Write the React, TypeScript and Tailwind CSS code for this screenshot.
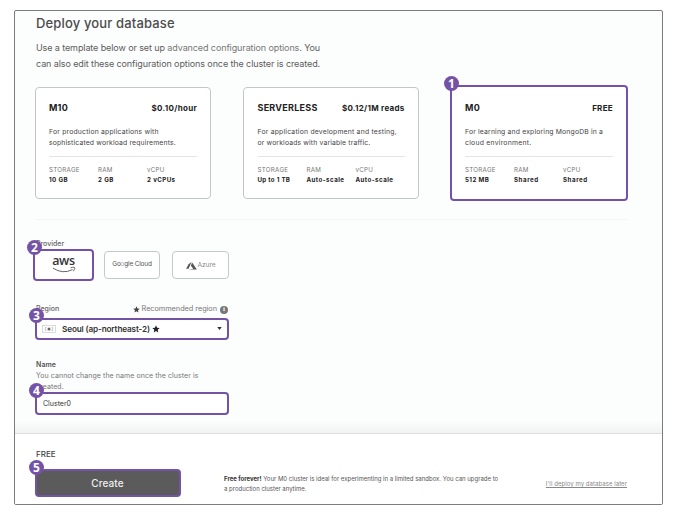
import React from "react";

function Badge({ n, className }: { n: number; className: string }) {
  return (
    <span
      className={`absolute z-10 flex size-[15px] items-center justify-center rounded-full bg-[#7453a6] font-['Open_Sans',sans-serif] text-[12px] leading-none font-bold text-white ${className}`}
    >
      {n}
    </span>
  );
}

function Star({ className }: { className: string }) {
  return (
    <svg viewBox="0 0 24 24" className={className} fill="currentColor">
      <path d="M12 1l3.2 7.4 8 .7-6.1 5.3 1.9 7.9-7-4.2-7 4.2 1.9-7.9L.8 9.100l8-.7z" />
    </svg>
  );
}

function Spec({ label, value, track }: { label: string; value: string; track: string }) {
  return (
    <div className="w-[49px] shrink-0 whitespace-nowrap">
      <div className="text-[6.2px] leading-[10px] tracking-[0.28px] text-[#777]">{label}</div>
      <div className={`text-[6.2px] leading-[10px] font-bold text-[#222] ${track}`}>{value}</div>
    </div>
  );
}

type CardProps = {
  title: string;
  titleTrack: string;
  price: string;
  priceTrack: string;
  lines: [string, string][];
  specs: [string, string, string][];
};

function CardBody({ title, titleTrack, price, priceTrack, lines, specs }: CardProps) {
  return (
    <>
      <div className="flex h-[12px] items-center justify-between whitespace-nowrap text-[#222]">
        <span className={`text-[9px] font-bold ${titleTrack}`}>{title}</span>
        <span className={`text-[8px] font-bold ${priceTrack}`}>{price}</span>
      </div>
      <div className="mt-[13px] text-[6.8px] leading-[10.5px] whitespace-nowrap text-[#444]">
        {lines.map(([t, k]) => (
          <div key={t} className={k}>{t}</div>
        ))}
      </div>
      <div className="mt-[8px] h-px bg-[#e3e4e4]" />
      <div className="mt-[8px] flex">
        {specs.map(([l, v, k]) => (
          <Spec key={l} label={l} value={v} track={k} />
        ))}
      </div>
    </>
  );
}

export default function App() {
  return (
    <div className="h-[520px] w-[674px] bg-white pt-[10px] pl-[14px] font-[Inter,sans-serif]">
      <div className="flex h-[495px] w-[649px] flex-col overflow-hidden rounded-[2px] border border-[#7c7c7c] bg-[#fcfdfd]">
        <main className="h-[422px] shrink-0 bg-linear-to-b from-transparent from-97% to-[#f1f2f2] pl-[20px]">
          <h1 className="pt-[2px] pl-px text-[13px] leading-[20px] font-medium tracking-[0.15px] whitespace-nowrap text-[#4c4c4c]">
            Deploy your database
          </h1>
          <div className="mt-[7px] pl-px text-[9px] leading-[15.5px] tracking-[-0.1px] whitespace-nowrap text-[#5c5c5c]">
            <div>
              Use a template below or set up <span className="text-[#777]">advanced configuration options.</span> You
            </div>
            <div>can also edit these configuration options once the cluster is created.</div>
          </div>

          <div className="mt-[14px] flex h-[116px] w-[593px] items-center justify-between">
            <section className="h-[112px] w-[176px] rounded-[4px] border border-[#c2c6c6] bg-white px-[13px] pt-[14px]">
              <CardBody
                title="M10"
                titleTrack="tracking-[0.2px]"
                price="$0.10/hour"
                priceTrack="tracking-[0.3px]"
                lines={[
                  ["For production applications with", "tracking-[0.21px]"],
                  ["sophisticated workload requirements.", "tracking-[0.17px]"],
                ]}
                specs={[
                  ["STORAGE", "10 GB", "tracking-[0.4px]"],
                  ["RAM", "2 GB", "tracking-[0.4px]"],
                  ["vCPU", "2 vCPUs", "tracking-[0.4px]"],
                ]}
              />
            </section>
            <section className="h-[112px] w-[176px] rounded-[4px] border border-[#c2c6c6] bg-white pt-[14px] pr-[13px] pl-[14px]">
              <CardBody
                title="SERVERLESS"
                titleTrack="tracking-[0.25px]"
                price="$0.12/1M reads"
                priceTrack="tracking-[0.27px]"
                lines={[
                  ["For application development and testing,", "tracking-[0.22px]"],
                  ["or workloads with variable traffic.", "tracking-[0.16px]"],
                ]}
                specs={[
                  ["STORAGE", "Up to 1 TB", "tracking-[0.3px]"],
                  ["RAM", "Auto-scale", "tracking-[0.45px]"],
                  ["vCPU", "Auto-scale", "tracking-[0.45px]"],
                ]}
              />
            </section>
            <section className="relative h-[116px] w-[178px] rounded-[4px] border-2 border-[#7453a6] bg-white px-[13px] pt-[15px]">
              <Badge n={1} className="-top-[11px] -left-[8px]" />
              <CardBody
                title="M0"
                titleTrack="tracking-[0.3px]"
                price="FREE"
                priceTrack="tracking-[0.3px]"
                lines={[
                  ["For learning and exploring MongoDB in a", "tracking-[0.18px]"],
                  ["cloud environment.", "tracking-[0.26px]"],
                ]}
                specs={[
                  ["STORAGE", "512 MB", "tracking-[0.4px]"],
                  ["RAM", "Shared", "tracking-[0.55px]"],
                  ["vCPU", "Shared", "tracking-[0.55px]"],
                ]}
              />
            </section>
          </div>

          <div className="mt-[18px] h-px w-[593px] bg-[#f4f5f5]" />

          <div className="mt-[19px] pl-px text-[7px] leading-[10px] font-medium text-[#666]">Provider</div>
          <div className="-ml-[2px] flex h-[32px] items-center">
            <div className="relative flex h-[32px] w-[61px] justify-center rounded-[4px] border-2 border-[#7453a6] bg-white">
              <Badge n={2} className="-top-[11px] -left-[8px]" />
              <div className="flex flex-col items-center pt-[4px]">
                <span className="font-['Open_Sans',sans-serif] text-[12.5px] leading-[11px] font-semibold tracking-[-0.3px] text-[#333]">aws</span>
                <svg viewBox="0 0 24 8" className="h-[8px] w-[24px]" fill="none" stroke="#666" strokeWidth="1">
                  <path d="M1 2.200Q11 8.500 20.500 3.600M18.500 1.800Q23.500.5 22.800 2.500L21.300 5.200" />
                </svg>
              </div>
            </div>
            <div className="ml-[10px] flex h-[28px] w-[56px] items-center justify-center rounded-[4px] border border-[#c5c8c8] bg-white text-[6.5px] tracking-[-0.2px] whitespace-nowrap text-[#555]">
              <span>Go<span className="text-[#aaa]">o</span>gle Cloud</span>
            </div>
            <div className="ml-[12px] flex h-[28px] w-[57px] items-center justify-center gap-[1px] rounded-[4px] border border-[#c5c8c8] bg-white pt-[2px] text-[6.6px] tracking-[-0.1px] text-[#888]">
              <svg viewBox="0 0 12 10" className="mb-[2px] h-[9px] w-[11px]">
                <path d="M6.200.8L2.800 3.600 0 8.500h2.700z" fill="#555" />
                <path d="M6.700 1.600L5.300 5.400 8 8.600 2.800 9.400H12z" fill="#555" />
              </svg>
              Azure
            </div>
          </div>

          <div className="mt-[22px] flex h-[13px] w-[193px] items-center justify-between pl-px whitespace-nowrap">
            <span className="text-[7px] font-medium text-[#666]">Region</span>
            <span className="flex items-center text-[7.3px] tracking-[-0.02px] text-[#777]">
              <Star className="mr-[2px] size-[7px] text-[#444]" />
              Recommended region
              <span className="ml-[3px] flex size-[8px] items-center justify-center rounded-full bg-[#777] font-['Liberation_Serif',serif] text-[7px] leading-none font-bold text-white">i</span>
            </span>
          </div>
          <div className="relative mt-[2px] flex h-[22px] w-[194px] items-center rounded-[4px] border-2 border-[#7453a6] bg-white pl-[5px]">
            <Badge n={3} className="-top-[12px] -left-[8px]" />
            <svg viewBox="0 0 14 8" className="h-[8px] w-[14px]">
              <rect x=".5" y=".5" width="13" height="7" fill="#fdfdfd" stroke="#ccc" strokeWidth=".7" />
              <circle cx="7" cy="4" r="1.500" fill="#666" />
              <path d="M4 2.200L3.300 3.600M4 5.800L3.300 4.400M10 2.200l.7 1.400M10 5.800l.7-1.400" stroke="#888" strokeWidth=".8" />
            </svg>
            <span className="ml-[6px] text-[8.2px] font-semibold tracking-[-0.14px] whitespace-nowrap text-[#333]">Seoul (ap-northeast-2)</span>
            <Star className="ml-[2px] size-[8px] text-[#222]" />
            <svg viewBox="0 0 6 4" className="mr-[5px] mb-[2px] ml-auto h-[3px] w-[5px]"><path d="M0 0h6L3 4z" fill="#333" /></svg>
          </div>

          <div className="mt-[19px] pl-px text-[7px] leading-[11px] tracking-[0.07px] whitespace-nowrap text-[#777]">
            <div className="font-semibold text-[#555]">Name</div>
            <div>You cannot change the name once the cluster is</div>
            <div>created.</div>
          </div>
          <div className="relative flex h-[23px] w-[194px] items-center rounded-[4px] border-2 border-[#7453a6] bg-white pt-px pl-[6px] text-[7px] text-[#333]">
            <Badge n={4} className="-top-[11px] -left-[8px]" />
            Cluster0
          </div>
        </main>

        <footer className="flex grow border-t border-[#dcdddd] bg-white pl-[20px]">
          <div className="pt-[14px]">
            <div className="pl-px text-[8px] leading-[12px] font-medium text-[#444]">FREE</div>
            <div className="relative mt-[9px] flex h-[28px] w-[146px] items-center justify-center rounded-[4px] border-2 border-[#7453a6] bg-[#5c5b5b] pr-px text-[10px] font-medium tracking-[0.1px] text-[#eee]">
              <Badge n={5} className="-top-[11px] -left-[8px]" />
              Create
            </div>
          </div>
          <div className="ml-[43px] pt-[40px] text-[6px] leading-[9.5px] whitespace-nowrap text-[#555]">
            <div><b className="font-bold text-[#333]">Free forever!</b> Your M0 cluster is ideal for experimenting in a limited sandbox. You can upgrade to</div>
            <div>a production cluster anytime.</div>
          </div>
          <a className="mt-[45px] mr-[35px] ml-auto h-[9px] text-[6px] leading-[9px] tracking-[0.06px] whitespace-nowrap text-[#888] underline">I'll deploy my database later</a>
        </footer>
      </div>
    </div>
  );
}
